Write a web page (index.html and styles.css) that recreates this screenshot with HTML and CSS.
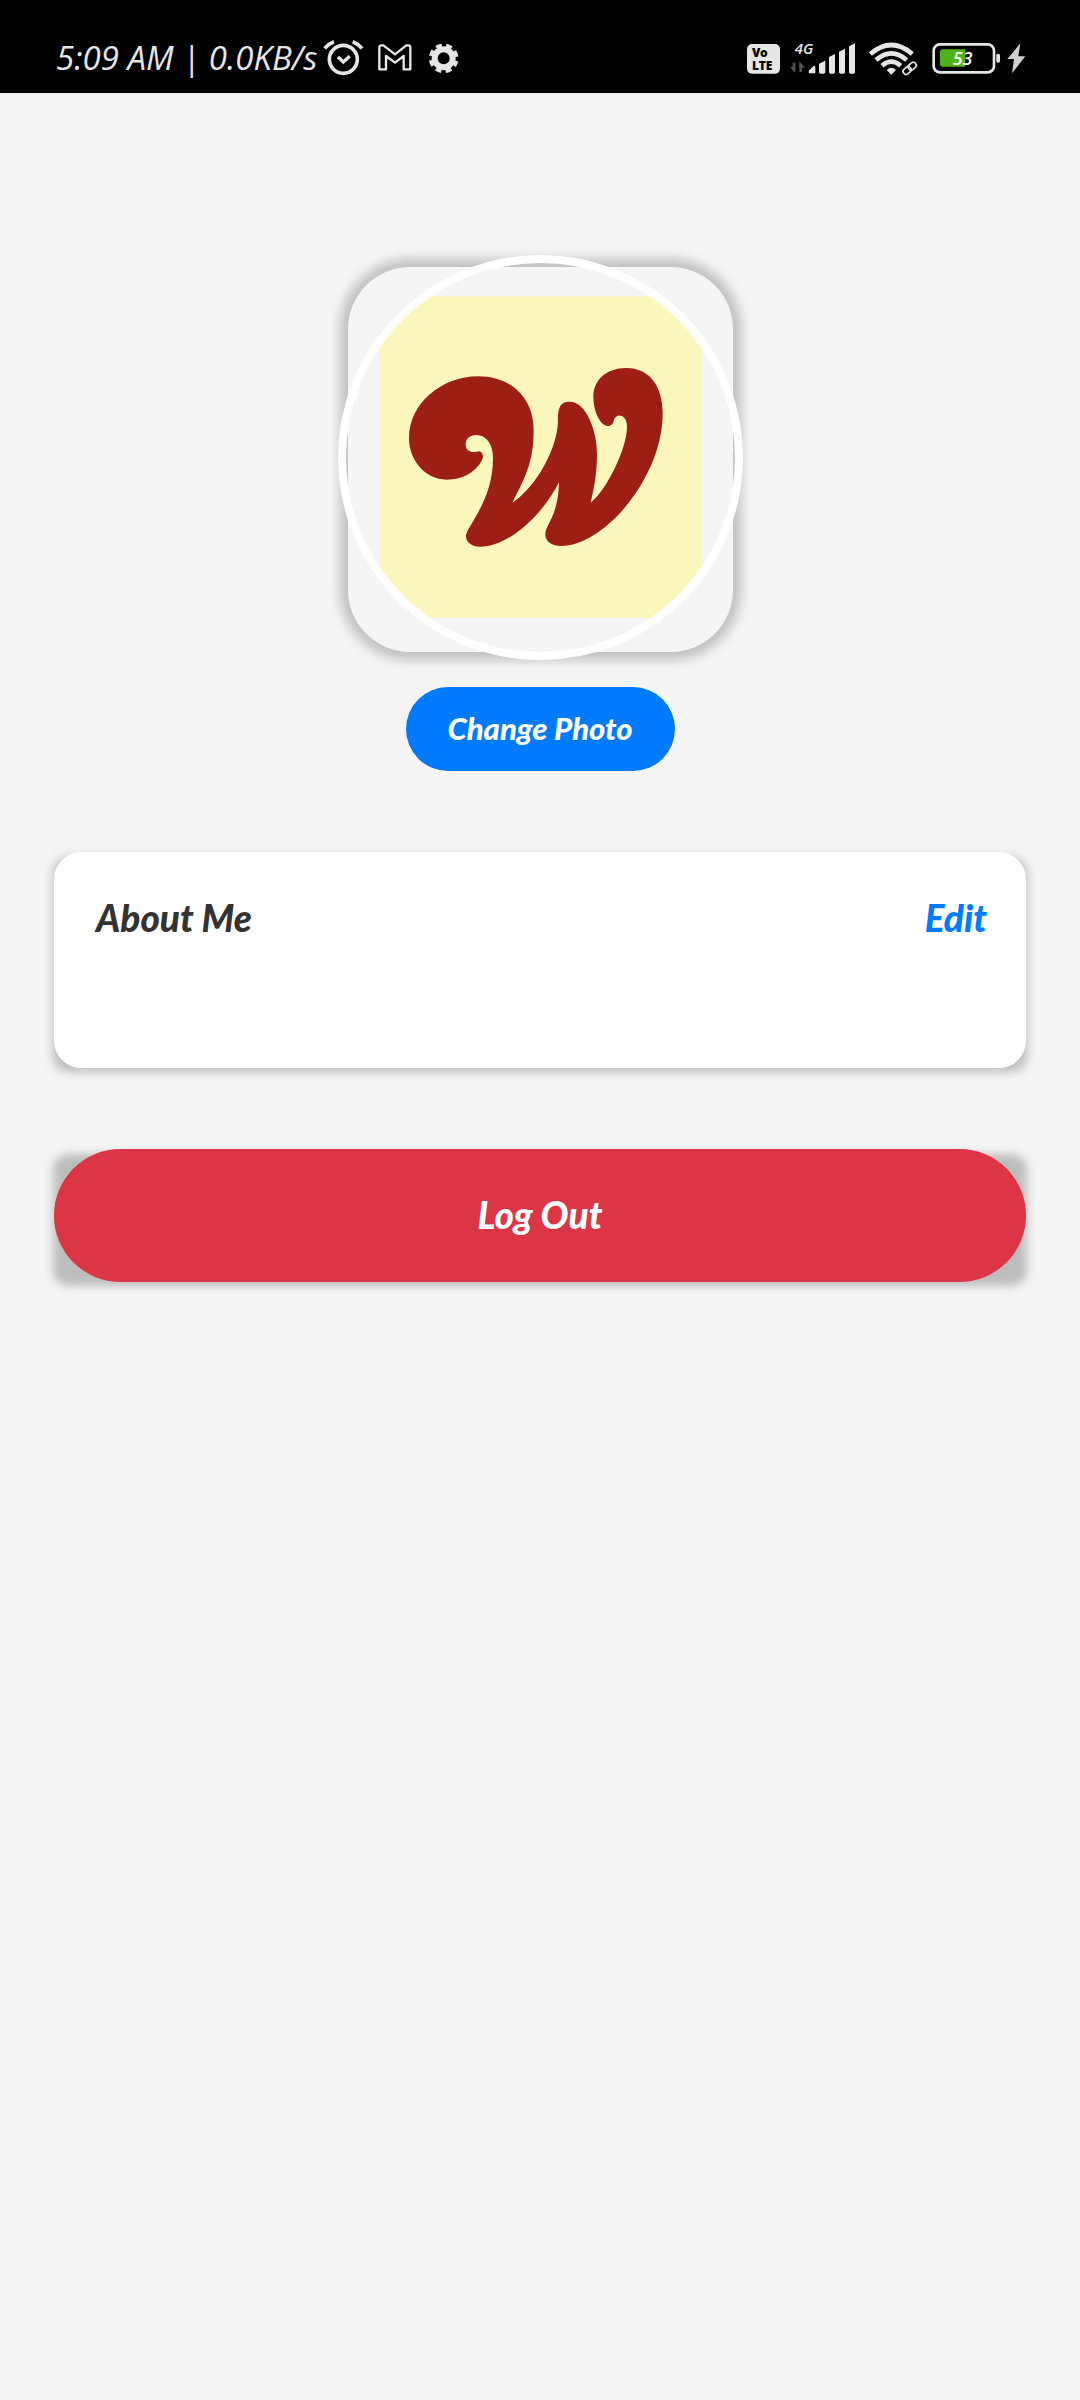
FILE: index.html
```html
<!DOCTYPE html>
<html lang="en">
<head>
<meta charset="utf-8">
<meta name="viewport" content="width=device-width, initial-scale=1">
<title>Profile</title>
<link rel="stylesheet" href="styles.css">
</head>
<body>
<header class="status">
  <div class="status-left">
    <span class="clock">5:09 AM | 0.0KB/s</span>
    <svg class="icon" width="40" height="40" viewBox="848 55 120 120" aria-label="Alarm">
      <g fill="none" stroke="#e6e6e6" stroke-width="11">
        <circle cx="909" cy="116" r="42"/>
        <path d="M893 109l16 15 19-17" stroke-width="10"/>
        <path d="M853 83q12-14 28-20M965 83q-12-14-28-20"/>
      </g>
    </svg>
    <svg class="icon" width="36" height="40" viewBox="1007 55 108 120" aria-label="Mail">
      <path d="M1014 80q0-6 7-6h5l35 27 34-27h6q6 0 6 6v66h-20v-40l-26 20-27-20v40h-20z" fill="none" stroke="#e6e6e6" stroke-width="7" stroke-linejoin="round"/>
    </svg>
    <svg class="icon" width="33" height="40" viewBox="1158 55 99 120" aria-label="Settings">
      <circle cx="1208" cy="113" r="27" fill="none" stroke="#e6e6e6" stroke-width="18"/>
      <circle cx="1208" cy="113" r="39" fill="none" stroke="#e6e6e6" stroke-width="11" stroke-dasharray="18 12.63" stroke-dashoffset="9" transform="rotate(22.5 1208 113)"/>
    </svg>
  </div>
  <div class="status-right">
    <svg class="icon" width="35" height="40" viewBox="51 55 105 120">
      <rect x="54" y="70" width="99" height="89" rx="15" fill="#e6e6e6"/>
      <g class="volte"><text x="69" y="109">Vo</text><text x="69" y="147">LTE</text></g>
    </svg>
    <svg class="icon" width="69" height="40" viewBox="177 55 207 120">
      <text class="network" x="194" y="101">4G</text>
      <path d="M192 126v20M212 154v-22" stroke="#555" stroke-width="8"/>
      <path d="M180 139h16v18zM208 122v19h17z" fill="#555"/>
      <path d="M236 153q0-5 5-8l10-9q5-2 5 4v18h-16q-4 0-4-5zM267 129l19-9v34q0 5-5 5h-9q-5 0-5-5zM297 109l18-9v54q0 5-5 5h-8q-5 0-5-5zM327 93l18-9v70q0 5-5 5h-8q-5 0-5-5zM357 77l18-9v86q0 5-5 5h-8q-5 0-5-5z" fill="#e6e6e6"/>
    </svg>
    <svg class="icon" width="55" height="40" viewBox="408 55 165 120" aria-label="Wi-Fi">
      <g fill="none" stroke="#e6e6e6" stroke-width="14">
        <path d="M421 100q63-54 126 0M438 118q46-40 92 0M456 135q28-24 56 0"/>
      </g>
      <path d="M470 148q14-13 28 0l-14 14z" fill="#e6e6e6"/>
      <g transform="rotate(-40 539 143)" fill="none">
        <g stroke="#000" stroke-width="13"><rect x="516" y="134" width="26" height="18" rx="9"/><rect x="536" y="134" width="26" height="18" rx="9"/></g>
        <g stroke="#e6e6e6" stroke-width="5"><rect x="516" y="134" width="26" height="18" rx="9"/><rect x="536" y="134" width="26" height="18" rx="9"/></g>
      </g>
    </svg>
    <svg class="icon" width="70" height="40" viewBox="597 55 210 120">
      <rect x="611" y="71" width="181" height="84" rx="19" fill="none" stroke="#e6e6e6" stroke-width="8"/>
      <path d="M637 86h68v52h-68q-7 0-7-7V93q0-7 7-7z" fill="#4db316"/>
      <rect x="799" y="99" width="11" height="27" rx="5" fill="#e6e6e6"/>
      <text class="level" x="668" y="132">53</text>
    </svg>
    <svg class="icon" width="19" height="40" viewBox="831 55 57 120" aria-label="Charging">
      <path d="M871 68l-39 47h20l-6 43 40-51h-21z" fill="#d0d0d0"/>
    </svg>
  </div>
</header>
<main class="profile">
  <div class="avatar">
    <div class="avatar-ring">
      <svg viewBox="78 69 1167 1167" role="img" aria-label="Profile photo">
        <rect x="178" y="169" width="965" height="965" fill="#fbf6bc"/>
        <path fill="#9c1e15" d="M475 409C575 409 641 476 641 570C641 660 620 705 577 788C650 740 711 625 714 545C714 510 716 485 749 485C800 485 831 575 831 640C831 700 823 740 812 788C860 750 921 625 921 560C921 520 886 518 881 543C876 560 862 560 855 556C835 545 820 508 820 470C820 420 860 384 918 384C990 384 1028 440 1028 520C1028 715 850 918 724 918C690 918 676 900 676 885C676 850 714 835 717 727C670 820 570 920 480 920C450 920 438 902 438 888C438 860 519 785 519 655C519 610 497 585 470 585C447 585 437 598 437 613C437 635 455 640 479 634C490 640 491 650 486 660C465 700 425 719 380 719C315 719 267 660 267 595C267 490 365 409 475 409Z"/>
      </svg>
    </div>
  </div>
  <button class="change" type="button">Change Photo</button>
  <section class="about">
    <div class="about-body">
      <h1>About Me</h1>
      <button class="edit" type="button">Edit</button>
    </div>
  </section>
  <div class="logout-wrap"><button class="logout" type="button">Log Out</button></div>
</main>
</body>
</html>
```
FILE: styles.css
```css
* { box-sizing: border-box; }

body {
  margin: 0;
  min-height: 100vh;
  background: #f5f5f5;
  font-family: Lato, "Open Sans", sans-serif;
}

button {
  border: 0;
  font-family: inherit;
  font-style: italic;
  font-weight: 900;
  cursor: pointer;
}

.status {
  display: flex;
  justify-content: space-between;
  align-items: center;
  height: 93px;
  padding: 24px 54px 0 56px;
  background: #000;
}

.status-left, .status-right { display: flex; align-items: center; }
.status-left { gap: 14px; }
.status-right { gap: 8px; }

.clock {
  width: 253px;
  padding-bottom: 2px;
  color: #e6e6e6;
  font: italic 33px/40px "Open Sans", sans-serif;
  white-space: nowrap;
}

.icon { display: block; flex: none; overflow: visible; }
.volte { font: 900 36px "Noto Sans", sans-serif; fill: #000; }
.network { font: italic 600 45px "Open Sans", sans-serif; fill: #e6e6e6; }
.level { font: italic 600 54px "Open Sans", sans-serif; fill: #fff; }

.profile {
  display: flex;
  flex-direction: column;
  align-items: center;
  padding: 162px 54px 0;
}

.avatar {
  position: relative;
  width: 405px;
  height: 405px;
}

.avatar::before {
  content: "";
  position: absolute;
  inset: 12px 10px 8px;
  border-radius: 62px;
  box-shadow: 0 0 12px 8px rgba(0, 0, 0, .22);
}

.avatar-ring {
  position: relative;
  height: 100%;
  border: 8px solid #fff;
  border-radius: 50%;
  overflow: hidden;
}

.avatar-ring svg { display: block; width: 100%; }

.change {
  width: 269px;
  height: 84px;
  margin-top: 27px;
  padding: 0 0 2px;
  border-radius: 42px;
  background: #007bff;
  color: #fff;
  font-size: 31px;
}

.about, .logout-wrap {
  position: relative;
  width: 100%;
}

.about { margin-top: 81px; }
.logout-wrap { margin-top: 81px; }

/* soft elevation shadow, squarer than the surface above it */
.about::before, .logout-wrap::before {
  content: "";
  position: absolute;
  inset: 5px -1px -4px;
  border-radius: 16px;
  background: #bdbdbd;
  filter: blur(5px);
}

.about-body {
  position: relative;
  display: flex;
  justify-content: space-between;
  align-items: flex-start;
  min-height: 216px;
  padding: 42px 39px 42px 42px;
  border-radius: 27px;
  background: #fff;
}

.about h1 {
  margin: 0;
  color: #333;
  font-size: 37px;
  font-style: italic;
  font-weight: 900;
  line-height: 48px;
}

.edit {
  padding: 0;
  background: none;
  color: #007bff;
  font-size: 37px;
  line-height: 48px;
}

.logout {
  position: relative;
  display: block;
  width: 100%;
  height: 133px;
  padding: 0 0 2px;
  border-radius: 67px;
  background: #dc3545;
  color: #fff;
  font-size: 37px;
}
```
